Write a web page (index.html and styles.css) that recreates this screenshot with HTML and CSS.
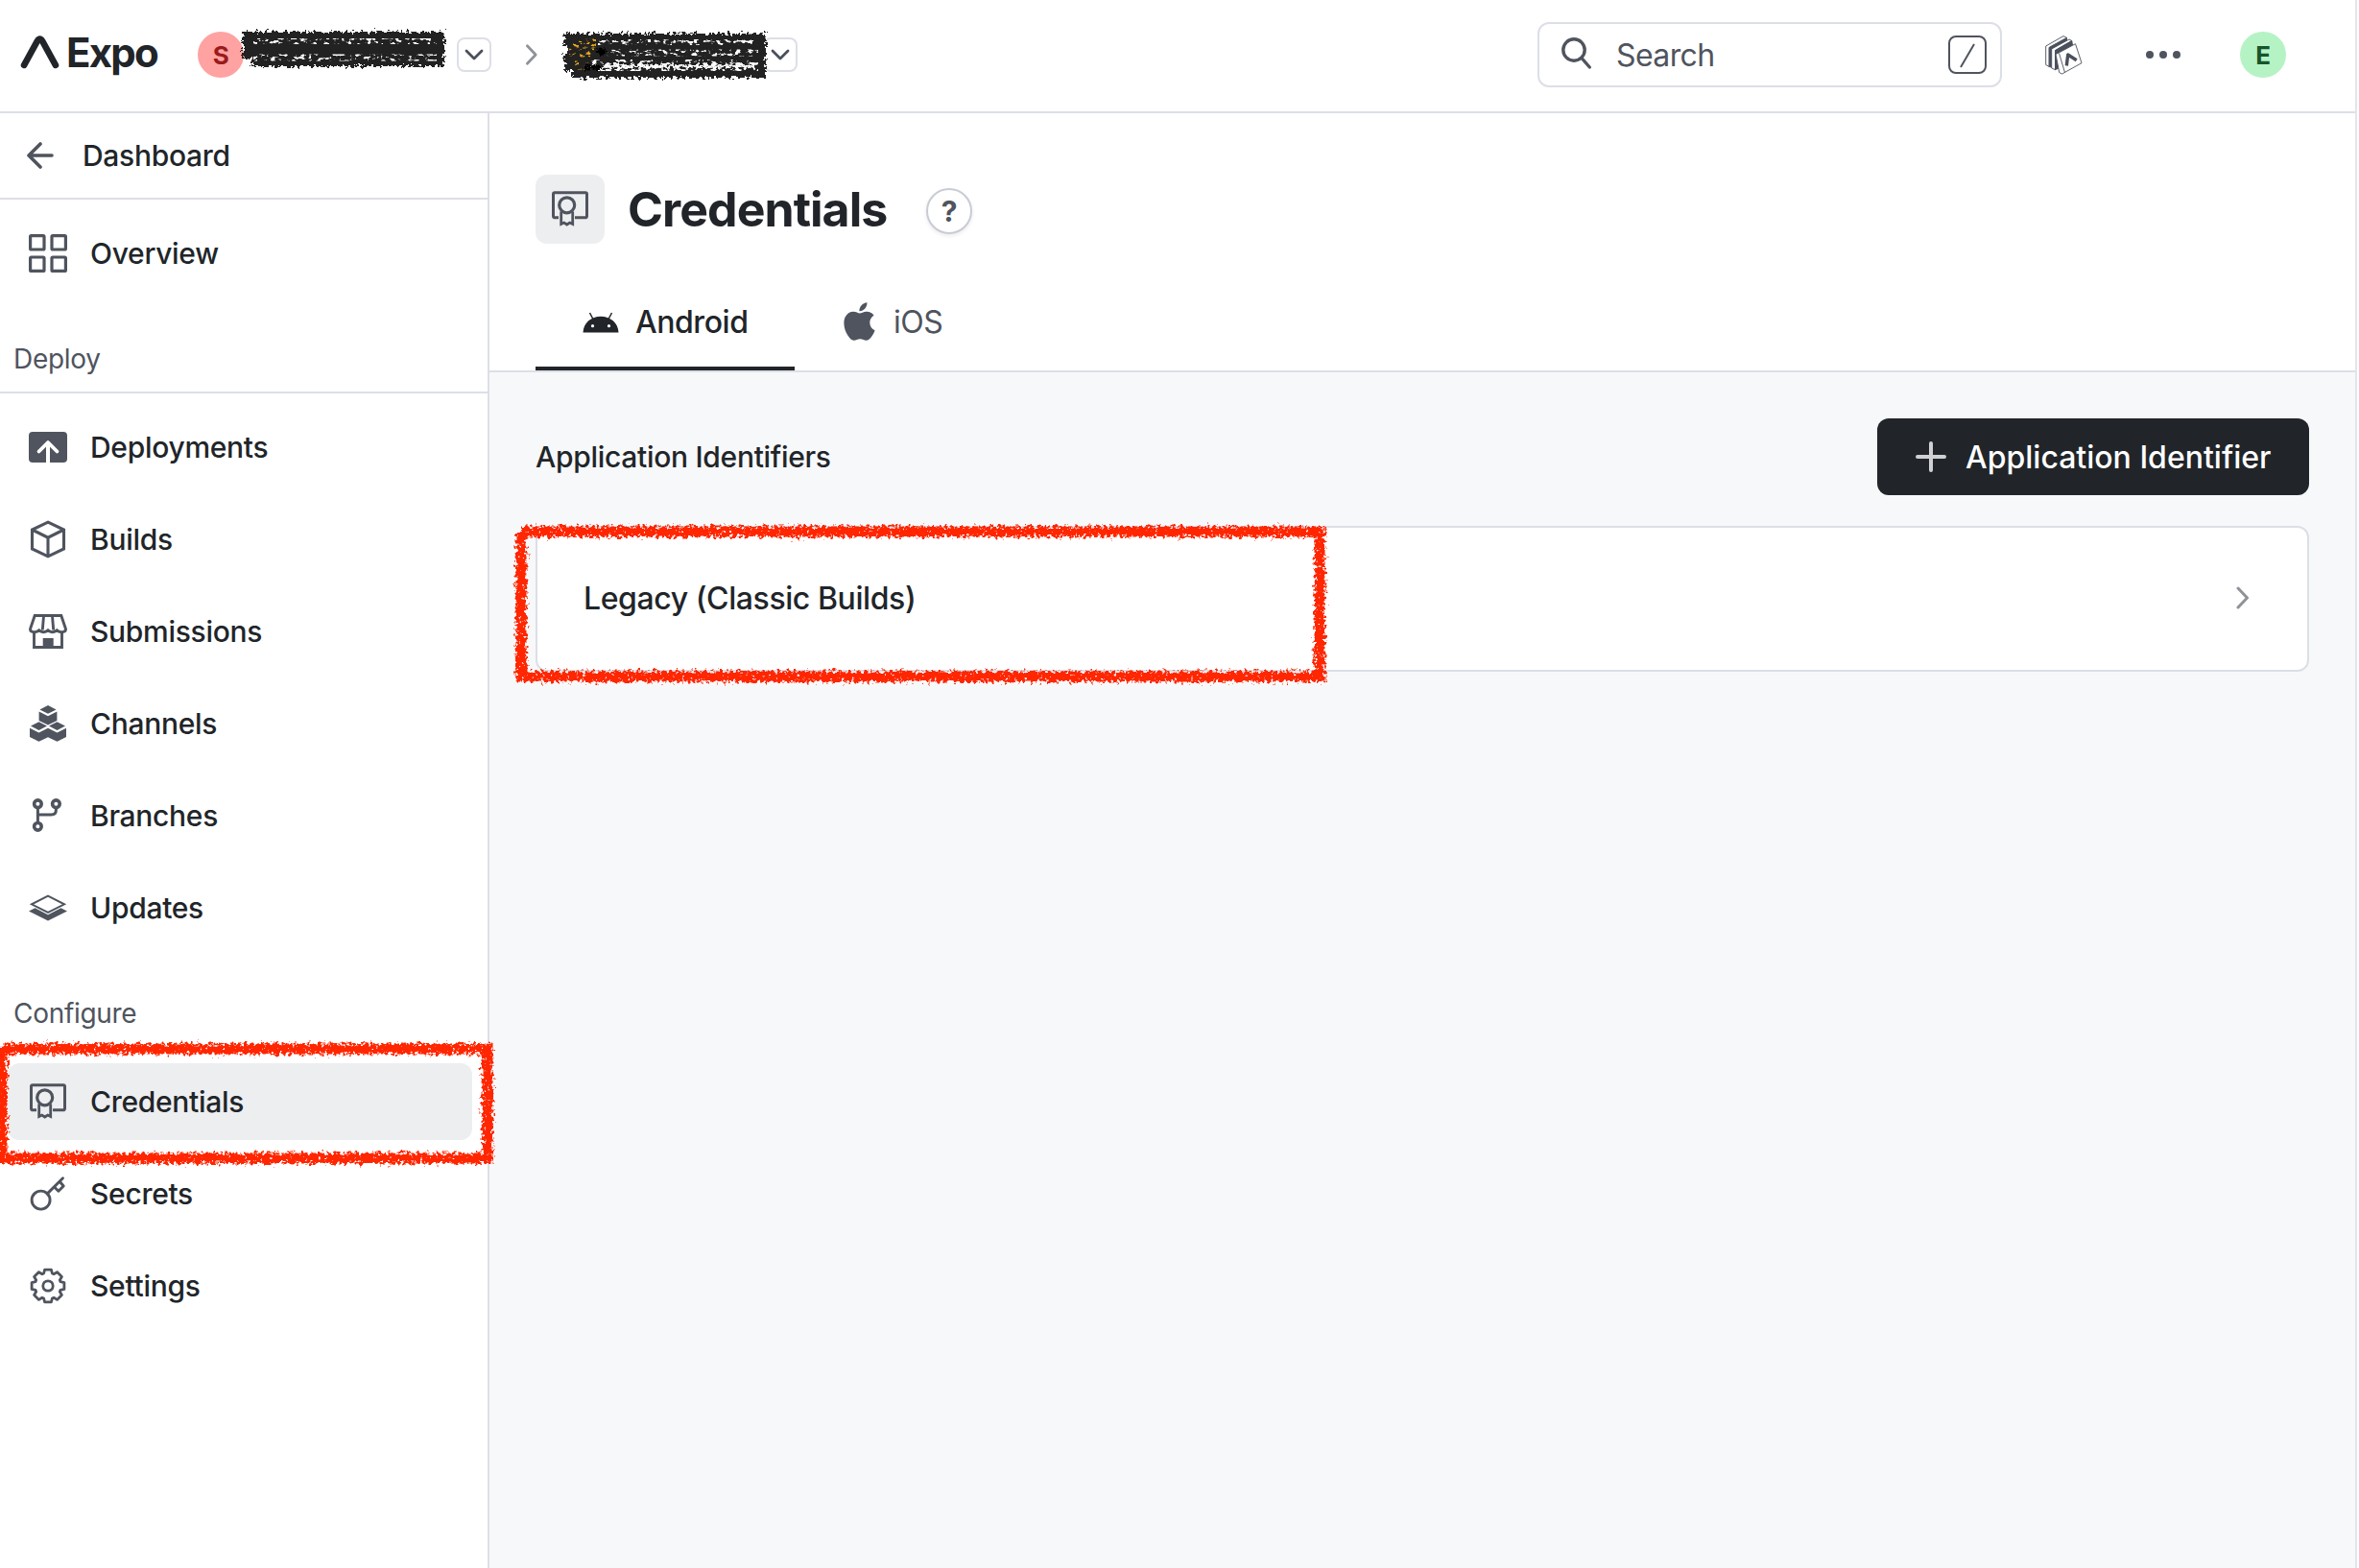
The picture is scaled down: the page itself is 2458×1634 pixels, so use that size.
FILE: index.html
```html
<!DOCTYPE html>
<html lang="en">
<head>
<meta charset="utf-8">
<title>Credentials — Expo</title>
<link rel="stylesheet" href="styles.css">
</head>
<body>
<svg class="defs" width="0" height="0" aria-hidden="true">
  <defs>
    <filter id="crayon" x="-20" y="-20" width="900" height="220" filterUnits="userSpaceOnUse" color-interpolation-filters="sRGB">
      <feTurbulence type="fractalNoise" baseFrequency="0.3" numOctaves="2" seed="4" result="edge"/>
      <feDisplacementMap in="SourceGraphic" in2="edge" scale="12" xChannelSelector="R" yChannelSelector="G" result="rough"/>
      <feTurbulence type="fractalNoise" baseFrequency="0.3" numOctaves="2" seed="11" result="grain"/>
      <feColorMatrix in="grain" type="matrix" values="0 0 0 0 0  0 0 0 0 0  0 0 0 0 0  0 0 0 -8 6.4" result="mask"/>
      <feComposite in="rough" in2="mask" operator="in"/>
    </filter>
    <filter id="marker" x="-10" y="-10" width="240" height="80" filterUnits="userSpaceOnUse" color-interpolation-filters="sRGB">
      <feTurbulence type="fractalNoise" baseFrequency="0.3" numOctaves="2" seed="7" result="edge"/>
      <feDisplacementMap in="SourceGraphic" in2="edge" scale="10" xChannelSelector="R" yChannelSelector="G"/>
    </filter>
    <filter id="speckle" x="-10" y="-10" width="240" height="80" filterUnits="userSpaceOnUse" color-interpolation-filters="sRGB">
      <feTurbulence type="fractalNoise" baseFrequency="0.16 0.3" numOctaves="3" seed="23" result="grain"/>
      <feColorMatrix in="grain" type="matrix" values="0 0 0 0 0  0 0 0 0 0  0 0 0 0 0  0 0 0 9 -4.9" result="mask"/>
      <feComposite in="SourceGraphic" in2="mask" operator="in"/>
    </filter>
    <symbol id="i-cert" viewBox="0 0 40 40">
      <path d="M8 28.8H4a1.5 1.5 0 0 1-1.5-1.5V4.3A1.5 1.5 0 0 1 4 2.8h32a1.5 1.5 0 0 1 1.5 1.5v23a1.5 1.5 0 0 1-1.5 1.5H25" fill="none" stroke="currentColor" stroke-width="3"/>
      <circle cx="16.7" cy="15.8" r="8" fill="none" stroke="currentColor" stroke-width="3.2"/>
      <path d="M10.7 22.5V35.5l3-1.5 3 2 3-2 3 1.5V22.5" fill="none" stroke="currentColor" stroke-width="2.8"/>
    </symbol>
    <symbol id="i-down" viewBox="0 0 20 12">
      <path d="M2 2l8 8 8-8" fill="none" stroke="currentColor" stroke-width="2.8" stroke-linecap="round" stroke-linejoin="round"/>
    </symbol>
    <symbol id="i-right" viewBox="0 0 14 26">
      <path d="M2 3l9.5 10L2 23" fill="none" stroke="currentColor" stroke-width="3" stroke-linecap="round" stroke-linejoin="round"/>
    </symbol>
  </defs>
</svg>

<header class="topbar">
  <a class="brand">
    <svg class="brand-mark" viewBox="0 0 40 36"><path d="M4 31L17.500 6.500Q20 2.500 22.500 6.500L36 31" fill="none" stroke="currentColor" stroke-width="6.500" stroke-linecap="round" stroke-linejoin="round"/></svg>
    <span class="brand-name">Expo</span>
  </a>
  <div class="crumb account">
    <span class="avatar avatar-red">S</span>
    <button class="drop"><svg class="drop-icon"><use href="#i-down"/></svg></button>
    <svg class="redact redact-account" viewBox="0 0 216 44">
      <path d="M3 4H213V40H12V32H3Z" fill="#222" filter="url(#marker)"/>
      <g filter="url(#speckle)" stroke="#fff" fill="none">
        <path d="M14 14H205" stroke-width="6"/>
        <path d="M14 31H205" stroke-width="7"/>
      </g>
    </svg>
  </div>
  <svg class="crumb-sep"><use href="#i-right"/></svg>
  <div class="crumb project">
    <button class="drop"><svg class="drop-icon"><use href="#i-down"/></svg></button>
    <svg class="redact redact-project" viewBox="0 0 216 52">
      <path d="M3 3H213V49H12V42H3V24H7V16H3Z" fill="#222" filter="url(#marker)"/>
      <g filter="url(#speckle)" fill="none">
        <path d="M12 13h24M8 23h26M14 36h14" stroke="#e8a81c" stroke-width="9"/>
        <path d="M38 12H205" stroke="#fff" stroke-width="6"/>
        <path d="M46 23H205" stroke="#fff" stroke-width="7"/>
        <path d="M30 36H205" stroke="#fff" stroke-width="12"/>
      </g>
      <path d="M44 37H203" stroke="#fff" stroke-width="3.500" filter="url(#marker)"/>
      <path d="M24 38h16M36 22h10" stroke="#000" stroke-width="5" filter="url(#marker)"/>
    </svg>
  </div>
  <div class="search">
    <svg class="search-icon" viewBox="0 0 32 34"><circle cx="13" cy="13" r="11.200" fill="none" stroke="currentColor" stroke-width="3.400"/><path d="M21 21.500L29.300 31" stroke="currentColor" stroke-width="3.400" stroke-linecap="round"/></svg>
    <span class="search-text">Search</span>
    <span class="key"><svg viewBox="0 0 36 36"><path d="M25 7L11 31" stroke="currentColor" stroke-width="2"/></svg></span>
  </div>
  <svg class="docs" viewBox="0 0 39 41">
    <g stroke="currentColor" stroke-width=".9" stroke-linejoin="round">
      <path d="M.7 11L19 .6l3.500 1.800L4.200 12.500V32.500L.7 30.500Z" fill="#fff"/>
      <path d="M4.200 12.500L22.500 2.400v4L8 14.500V33.500L4.200 32.500Z" fill="currentColor"/>
      <path d="M6.700 14L25 4l2.800 1.500-17.300 10V35.700L6.700 34Z" fill="#fff"/>
      <path d="M10.500 15.500L27.800 5.500 28.500 10 15 18v15.500l-4.500 2.200Z" fill="currentColor"/>
      <path d="M11 19.500l3.500-1.700L31.500 8.700 38 28.700 17.500 40l-2.800-1.500Z" fill="#fff"/>
      <path d="M14.500 18.500L20.500 38.500" fill="none"/>
    </g>
    <path d="M22.300 31.500L23.700 20l9 5.700" fill="none" stroke="currentColor" stroke-width="3.400" stroke-linejoin="round"/>
  </svg>
  <svg class="dots" viewBox="0 0 36 8"><circle cx="4" cy="4" r="4"/><circle cx="18" cy="4" r="4"/><circle cx="32" cy="4" r="4"/></svg>
  <span class="avatar avatar-green">E</span>
</header>

<div class="body">
  <nav class="sidebar">
    <a class="back">
      <svg class="back-icon" viewBox="0 0 28 28"><path d="M26 14H2M14 2L2 14l12 12" fill="none" stroke="currentColor" stroke-width="3.600" stroke-linecap="round" stroke-linejoin="round"/></svg>
      <span>Dashboard</span>
    </a>
    <div class="group">
      <a class="item"><svg class="icon" viewBox="0 0 40 40"><g fill="none" stroke="currentColor" stroke-width="3.200"><rect x="1.600" y="1.600" width="14.400" height="14.400" rx="1"/><rect x="24" y="1.600" width="14.400" height="14.400" rx="1"/><rect x="1.600" y="24" width="14.400" height="14.400" rx="1"/><rect x="24" y="24" width="14.400" height="14.400" rx="1"/></g></svg><span>Overview</span></a>
    </div>
    <h2 class="label">Deploy</h2>
    <div class="group">
      <a class="item"><svg class="icon" viewBox="0 0 40 40"><rect y="4" width="40" height="32" rx="4" fill="currentColor"/><path d="M20 36V15" stroke="#fff" stroke-width="4"/><path d="M10.500 24.500L20 15l9.500 9.500" fill="none" stroke="#fff" stroke-width="3.800" stroke-linecap="round" stroke-linejoin="round"/></svg><span>Deployments</span></a>
      <a class="item"><svg class="icon" viewBox="0 0 40 40"><path d="M20 2.200L36.500 10V30L20 37.800 3.500 30V10ZM3.500 10L20 18.200 36.500 10M20 18.200V37" fill="none" stroke="currentColor" stroke-width="3.100"/></svg><span>Builds</span></a>
      <a class="item"><svg class="icon" viewBox="0 0 40 40"><g fill="none" stroke="currentColor" stroke-width="2.900"><path d="M6.200 3.500H33.800L38.500 17.500c0 2-2 3.200-4.500 3.200s-3.800-.9-4.700-1.900c-1 1-2.600 1.900-4.600 1.900s-3.700-.9-4.700-1.900c-1 1-2.700 1.900-4.700 1.900s-3.600-.9-4.600-1.900c-.9 1-2.200 1.900-4.700 1.900s-4.500-1.200-4.500-3.200ZM15.500 4L14.300 18.500M24.500 4L25.700 18.500"/><path d="M5.500 20.500V36.500H34.500V20.500"/></g><rect x="14.700" y="27" width="11" height="10" fill="currentColor"/></svg><span>Submissions</span></a>
      <a class="item"><svg class="icon" viewBox="0 0 40 40"><path fill="currentColor" d="M20 1l8.600 4.400L20 9.700 11.400 5.400ZM10.600 7.500L20 12.200l9.400-4.700v9.400L20 21.500l-9.400-4.600ZM10.500 18.300l8.500 4.300-8.500 4.300L2 22.600ZM29.500 18.300l8.500 4.300-8.500 4.300L21 22.600ZM1 24.700l9.500 4.700L20 24.700l9.500 4.700L39 24.700v9.200l-9.500 4.900L20 34.300l-9.500 4.500L1 33.900Z"/></svg><span>Channels</span></a>
      <a class="item"><svg class="icon" viewBox="0 0 40 40"><g fill="none" stroke="currentColor" stroke-width="3.600"><circle cx="9.400" cy="7.700" r="3.800"/><circle cx="28.400" cy="7.700" r="3.800"/><circle cx="9.400" cy="31.300" r="3.800"/><path d="M9.400 11.500V27.500M28.400 11.500V14q0 5-5 5H9.400" stroke-width="3"/></g></svg><span>Branches</span></a>
      <a class="item"><svg class="icon" viewBox="0 0 40 40"><path d="M20 7.700L37 16.300 20 24.900 3 16.300Z" fill="none" stroke="currentColor" stroke-width="2"/><path d="M6.500 20.200L20 27.200l13.500-7L40 23.400 20 33.400 0 23.400Z" fill="currentColor"/></svg><span>Updates</span></a>
    </div>
    <h2 class="label">Configure</h2>
    <div class="group">
      <a class="item active"><svg class="icon"><use href="#i-cert"/></svg><span>Credentials</span></a>
      <a class="item"><svg class="icon" viewBox="0 0 40 40"><g fill="none" stroke="currentColor" stroke-width="2.900"><circle cx="12.600" cy="26.600" r="9.500"/><path d="M19.300 19.900L35.500 3.700" stroke-linecap="round"/><path d="M32.200 7.200l4 4.800-5.300 5.300-4.600-4.500" stroke-linejoin="round"/></g></svg><span>Secrets</span></a>
      <a class="item"><svg class="icon" viewBox="-20 -20 40 40"><g fill="none" stroke="currentColor" stroke-width="2.800" stroke-linejoin="round"><path d="M-4.400-13L-3.400-16.900H3.400L4.400-13 6.100-12.300 9.500-14.400 14.400-9.500 12.300-6.100 13-4.400 16.900-3.400V3.400L13 4.400 12.300 6.100 14.400 9.500 9.500 14.400 6.100 12.300 4.400 13 3.400 16.900H-3.400L-4.400 13-6.100 12.300-9.500 14.400-14.400 9.500-12.300 6.100-13 4.400-16.900 3.400V-3.400L-13-4.400-12.300-6.100-14.400-9.500-9.500-14.400-6.100-12.300Z"/><circle r="5.200"/></g></svg><span>Settings</span></a>
    </div>
    <svg class="mark mark-nav" viewBox="0 0 518 136"><path filter="url(#crayon)" d="M4 11H510V125H4V11" fill="none" stroke="#ff2600" stroke-width="11"/></svg>
  </nav>

  <main class="main">
    <section class="page-head">
      <div class="title-row">
        <span class="title-icon"><svg class="icon"><use href="#i-cert"/></svg></span>
        <h1 class="title">Credentials</h1>
        <button class="help">?</button>
      </div>
      <div class="tabs">
        <a class="tab tab-on"><svg class="tab-android" viewBox="0 0 38 22"><path d="M.5 21.500C1 11.500 9 4.800 19 4.800S37 11.500 37.500 21.500Z" fill="currentColor"/><path d="M7.500 1l3.200 6M30.500 1l-3.200 6" stroke="currentColor" stroke-width="1.500"/><circle cx="10.500" cy="14.700" r="1.600" fill="#fff"/><circle cx="27.500" cy="14.700" r="1.600" fill="#fff"/></svg><span>Android</span></a>
        <a class="tab"><svg class="tab-apple" viewBox="2 0 20 24"><path fill="currentColor" d="M12.152 6.896c-.948 0-2.415-1.078-3.960-1.040-2.040.027-3.910 1.183-4.961 3.014-2.117 3.675-.546 9.103 1.519 12.090 1.013 1.454 2.208 3.090 3.792 3.039 1.520-.065 2.090-.987 3.935-.987 1.831 0 2.350.987 3.960.948 1.637-.026 2.676-1.480 3.676-2.948 1.156-1.688 1.636-3.325 1.662-3.415-.039-.013-3.182-1.221-3.220-4.857-.026-3.040 2.480-4.494 2.597-4.559-1.429-2.090-3.623-2.324-4.390-2.376-2-.156-3.675 1.090-4.610 1.090zM15.530 3.830c.843-1.012 1.400-2.427 1.245-3.830-1.207.052-2.662.805-3.532 1.818-.780.896-1.454 2.338-1.273 3.714 1.338.104 2.715-.688 3.559-1.701"/></svg><span>iOS</span></a>
      </div>
    </section>
    <section class="content">
      <div class="content-head">
        <h2 class="content-title">Application Identifiers</h2>
        <button class="primary"><svg class="plus" viewBox="0 0 32 32"><path d="M16 2V30M2 16H30" stroke="currentColor" stroke-width="4" stroke-linecap="round"/></svg><span>Application Identifier</span></button>
      </div>
      <a class="card"><span>Legacy (Classic Builds)</span><svg class="card-arrow"><use href="#i-right"/></svg></a>
      <svg class="mark mark-card" viewBox="0 0 852 168"><path filter="url(#crayon)" d="M9 8H841V159H9V8" fill="none" stroke="#ff2600" stroke-width="11"/></svg>
    </section>
  </main>
</div>
</body>
</html>
```
FILE: styles.css
```css
* { box-sizing: border-box; }
html { background: #fff; }
body {
  margin: 0;
  width: 2456px;
  height: 1634px;
  display: flex;
  flex-direction: column;
  overflow: hidden;
  background: #fff;
  border-right: 2px solid #e4e5e8;
  font-family: Inter, "Liberation Sans", sans-serif;
  font-size: 30px;
  font-weight: 500;
  letter-spacing: -0.3px;
  color: #212529;
}
svg { display: block; flex: none; }
.defs { position: absolute; }
h1, h2 { margin: 0; font: inherit; }
button { font: inherit; letter-spacing: inherit; margin: 0; padding: 0; border: 0; }

.topbar {
  flex: none;
  display: flex;
  align-items: center;
  height: 118px;
  padding: 0 72px 2px 21px;
  border-bottom: 2px solid #dcdfe6;
}
.brand { display: flex; align-items: center; width: 185px; gap: 7px; }
.brand-mark { width: 41px; height: 37px; margin-top: -6px; }
.brand-name { font-size: 42px; font-weight: 700; letter-spacing: -1.8px; line-height: 48px; margin-top: -5px; }
.crumb { position: relative; display: flex; align-items: center; }
.account { width: 306px; justify-content: space-between; }
.avatar {
  flex: none;
  display: flex;
  align-items: center;
  justify-content: center;
  width: 48px;
  height: 48px;
  border-radius: 50%;
  font-size: 26px;
  font-weight: 700;
}
.avatar-red { background: #ffa2a2; color: #991b1b; }
.avatar-green { background: #b5f3c5; color: #18542a; }
.drop {
  display: flex;
  align-items: center;
  justify-content: center;
  width: 36px;
  height: 36px;
  border: 2px solid #dcdfe6;
  border-radius: 8px;
  background: #fff;
  color: #4a4f5b;
}
.drop-icon { width: 20px; height: 12px; }
.crumb-sep { width: 14px; height: 24px; margin: 0 24px 0 35px; color: #8f9299; }
.project { width: 246px; justify-content: flex-end; }
.redact { position: absolute; overflow: visible; }
.redact-account { left: 44px; top: -4px; width: 216px; height: 44px; }
.redact-project { left: 0; top: -7px; width: 216px; height: 52px; }

.search {
  display: flex;
  align-items: center;
  width: 484px;
  height: 68px;
  margin-left: auto;
  padding: 0 14px 0 22px;
  border: 2px solid #dcdfe6;
  border-radius: 12px;
  color: #4f545e;
  font-size: 32px;
  font-weight: 400;
  letter-spacing: -0.6px;
}
.search-icon { width: 32px; height: 34px; margin: -3px 25px 0 1px; }
.search-text { flex: 1; }
.key { width: 40px; height: 40px; border: 2px solid #4f545e; border-radius: 8px; }
.docs { width: 39px; height: 41px; margin: 0 66px 0 45px; color: #4a4f5b; }
.dots { width: 36px; height: 8px; margin-right: 62px; fill: #4f545e; }

.body { flex: 1; display: flex; min-height: 0; }
.sidebar {
  position: relative;
  flex: none;
  width: 510px;
  border-right: 2px solid #dcdfe6;
}
.back {
  display: flex;
  align-items: center;
  gap: 30px;
  height: 90px;
  padding-left: 28px;
  border-bottom: 2px solid #dcdfe6;
}
.back-icon { width: 28px; height: 28px; color: #4f545e; }
.group { display: flex; flex-direction: column; gap: 16px; padding: 16px 16px 0 8px; }
.item {
  display: flex;
  align-items: center;
  gap: 24px;
  height: 80px;
  padding-left: 22px;
  border-radius: 12px;
}
.active { background: #edeef0; }
.icon { width: 40px; height: 40px; color: #4f545e; }
.label {
  display: flex;
  align-items: flex-end;
  height: 106px;
  padding: 0 0 14px 14px;
  border-bottom: 2px solid #dcdfe6;
  font-size: 28px;
  font-weight: 400;
  line-height: 40px;
  color: #4f545e;
}
.mark { position: absolute; overflow: visible; z-index: 2; }
.mark-nav { left: -2px; top: 964px; width: 518px; height: 136px; }
.mark-card { left: 24px; top: 158px; width: 852px; height: 168px; }

.main { flex: 1; display: flex; flex-direction: column; background: #f7f8fa; }
.page-head { background: #fff; padding: 64px 48px 0; border-bottom: 2px solid #dcdfe6; }
.title-row { display: flex; align-items: center; height: 72px; }
.title-icon {
  display: flex;
  align-items: center;
  justify-content: center;
  width: 72px;
  height: 72px;
  border-radius: 12px;
  background: #edeef0;
}
.title { font-size: 50px; font-weight: 700; letter-spacing: -0.95px; margin-left: 24px; width: 311px; white-space: nowrap; }
.help {
  width: 48px;
  height: 48px;
  margin-top: 4px;
  border: 2px solid #c8ccd4;
  border-radius: 50%;
  background: #fff;
  box-shadow: 0 2px 4px rgba(0, 0, 0, .08);
  font-size: 30px;
  font-weight: 700;
  line-height: 44px;
  color: #4f545e;
}
.tabs { display: flex; height: 132px; padding-top: 30px; font-size: 32px; letter-spacing: -0.45px; }
.tab { display: flex; align-items: center; height: 102px; color: #4f545e; font-weight: 400; padding-left: 51px; }
.tab-on { width: 270px; padding: 4px 0 0 49px; border-bottom: 4px solid #212529; color: #212529; font-weight: 500; }
.tab-android { width: 38px; height: 22px; margin: 2px 17px 0 0; }
.tab-apple { width: 33px; height: 40px; margin-right: 19px; }
.content { position: relative; padding: 48px 48px 0; }
.content-head { display: flex; align-items: center; justify-content: space-between; height: 80px; margin-bottom: 32px; }
.primary {
  display: flex;
  align-items: center;
  gap: 20px;
  width: 450px;
  height: 80px;
  padding-left: 40px;
  border-radius: 12px;
  background: #212529;
  color: #fff;
  font-size: 32px;
  letter-spacing: 0;
}
.plus { width: 32px; height: 32px; color: #d0d1d3; }
.card {
  display: flex;
  align-items: center;
  justify-content: space-between;
  height: 152px;
  padding: 0 60px 2px 48px;
  border: 2px solid #dcdfe6;
  border-radius: 12px;
  background: #fff;
  font-size: 32px;
  letter-spacing: -0.42px;
}
.card-arrow { width: 14px; height: 26px; color: #8f9299; }
```
